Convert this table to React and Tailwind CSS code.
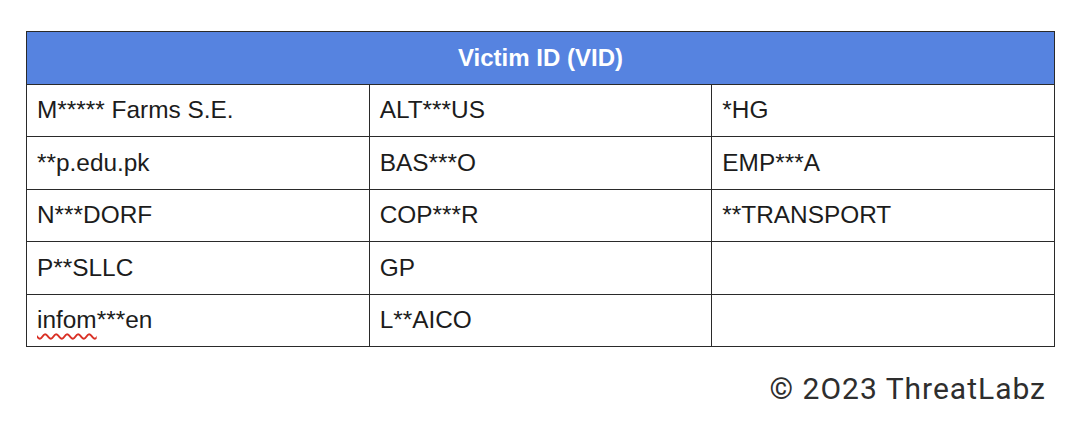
const rows = [
    ['M***** Farms S.E.', 'ALT***US', '*HG'],
    ['**p.edu.pk', 'BAS***O', 'EMP***A'],
    ['N***DORF', 'COP***R', '**TRANSPORT'],
    ['P**SLLC', 'GP', ''],
    ['infom***en', 'L**AICO', ''],
];

const App = () => {
    return (
        <div className="w-[1080px] h-[439px] bg-white pt-[31px] pl-[26px] font-['Liberation_Sans',Arial,sans-serif]">
            <table className="w-[1029px] border-collapse table-fixed">
                <thead>
                    <tr>
                        <th
                            colSpan={3}
                            className="h-[53px] bg-[#5683e0] border-[1.5px] border-[#2a2a2a] text-white text-[24px] font-bold text-center leading-none"
                        >
                            Victim ID (VID)
                        </th>
                    </tr>
                </thead>
                <tbody>
                    {rows.map((row, i) => (
                        <tr key={i}>
                            {row.map((cell, j) => (
                                <td
                                    key={j}
                                    className="h-[52.4px] border-[1.5px] border-[#2a2a2a] px-[10px] text-[24.4px] leading-none text-[#1c1c1c] align-middle"
                                >
                                    {cell === 'infom***en' ? (
                                        <>
                                            <span className="underline decoration-wavy decoration-[#d93025] decoration-[1.5px] underline-offset-[5px]">infom</span>
                                            ***en
                                        </>
                                    ) : (
                                        cell
                                    )}
                                </td>
                            ))}
                        </tr>
                    ))}
                </tbody>
            </table>
            <div className="w-[1020px] mt-[27px] text-right text-[30px] tracking-[1px] leading-none text-[#2e2e2e] font-['Roboto',sans-serif]">
                © 2O23 ThreatLabz
            </div>
        </div>
    );
};

export default App;
